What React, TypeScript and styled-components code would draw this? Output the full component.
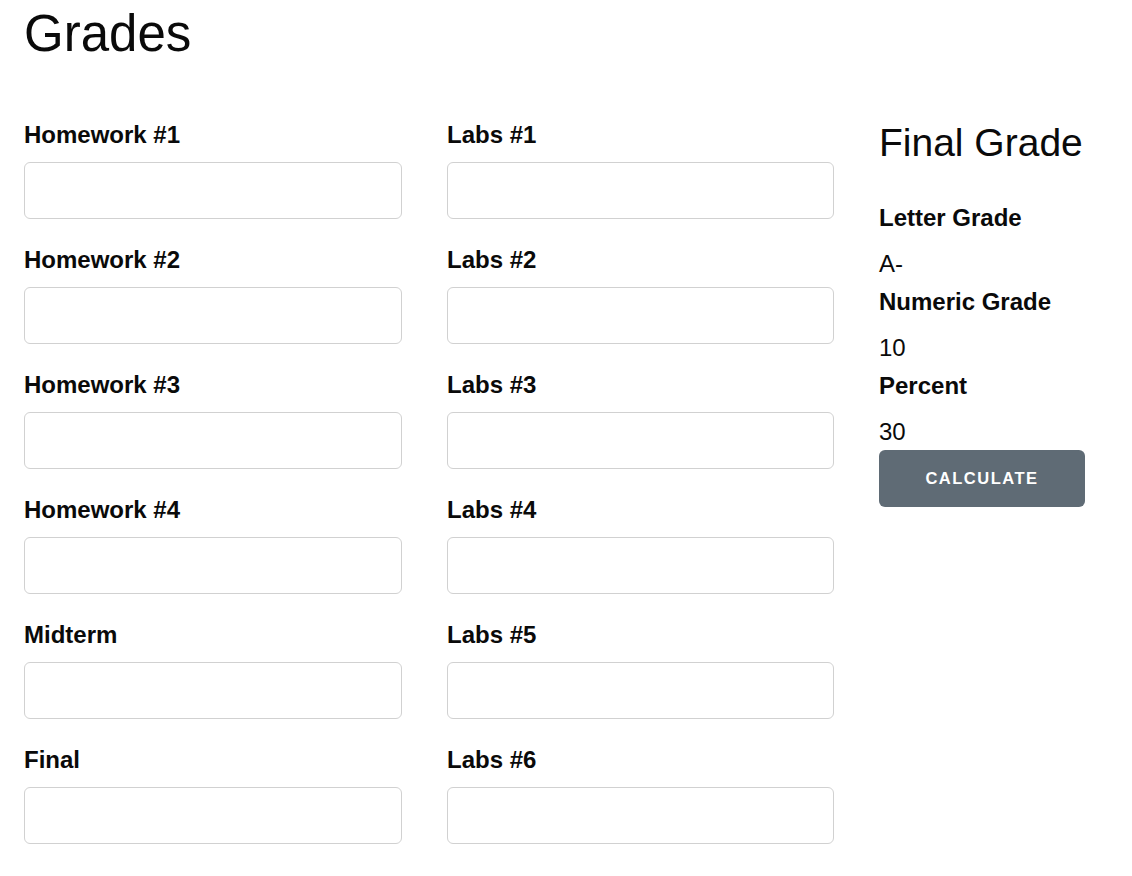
import * as React from 'react';
import styled, { createGlobalStyle } from 'styled-components';

const GlobalStyle = createGlobalStyle`
  body {
    margin: 0;
    background: #fff;
    color: #0a0a0a;
    font-family: 'Liberation Sans', Arial, sans-serif;
  }
`;

const Page = styled.div`
  padding: 0 24px;
`;

const Title = styled.h1`
  margin: 4px 0 0;
  font-size: 51px;
  font-weight: 300;
  line-height: 60px;
`;

const Layout = styled.div`
  display: grid;
  grid-template-columns: 378px 387px 206px;
  column-gap: 45px;
  margin-top: 53px;
`;

const Column = styled.div`
  display: flex;
  flex-direction: column;
`;

const Label = styled.label<{ gap?: number }>`
  display: block;
  font-size: 24px;
  font-weight: 700;
  line-height: 36px;
  margin-bottom: ${({ gap }) => (gap ?? 9) + 'px'};
`;

const Input = styled.input`
  box-sizing: border-box;
  width: 100%;
  height: 57px;
  margin: 0 0 23px;
  padding: 9px 15px;
  border: 1px solid #d1d1d1;
  border-radius: 6px;
  background: #fff;
  font: inherit;
  font-size: 22px;
`;

const Summary = styled.div`
  display: flex;
  flex-direction: column;
  padding-top: 2px;
`;

const SubTitle = styled.h3`
  margin: 0 0 33px;
  font-size: 39px;
  font-weight: 300;
  line-height: 48px;
  white-space: nowrap;
`;

const Value = styled.div<{ last?: boolean }>`
  font-size: 24px;
  line-height: 36px;
  margin-bottom: ${({ last }) => (last ? '0' : '2px')};
`;

const Button = styled.button`
  width: 206px;
  height: 57px;
  border: none;
  border-radius: 6px;
  background: #5f6b75;
  color: #fff;
  font-family: inherit;
  font-size: 16.5px;
  font-weight: 700;
  letter-spacing: 1.5px;
  text-transform: uppercase;
  cursor: pointer;
`;

const homework = ['Homework #1', 'Homework #2', 'Homework #3', 'Homework #4', 'Midterm', 'Final'];
const labs = ['Labs #1', 'Labs #2', 'Labs #3', 'Labs #4', 'Labs #5', 'Labs #6'];

const Field: React.FC<{ name: string }> = ({ name }) => (
  <>
    <Label>{name}</Label>
    <Input type="text" />
  </>
);

export default function App() {
  return (
    <Page>
      <GlobalStyle />
      <Title>Grades</Title>
      <Layout>
        <Column>
          {homework.map((n) => (
            <Field key={n} name={n} />
          ))}
        </Column>
        <Column>
          {labs.map((n) => (
            <Field key={n} name={n} />
          ))}
        </Column>
        <Summary>
          <SubTitle>Final Grade</SubTitle>
          <Label gap={10}>Letter Grade</Label>
          <Value>A-</Value>
          <Label gap={10}>Numeric Grade</Label>
          <Value>10</Value>
          <Label gap={10}>Percent</Label>
          <Value last>30</Value>
          <Button>Calculate</Button>
        </Summary>
      </Layout>
    </Page>
  );
}
